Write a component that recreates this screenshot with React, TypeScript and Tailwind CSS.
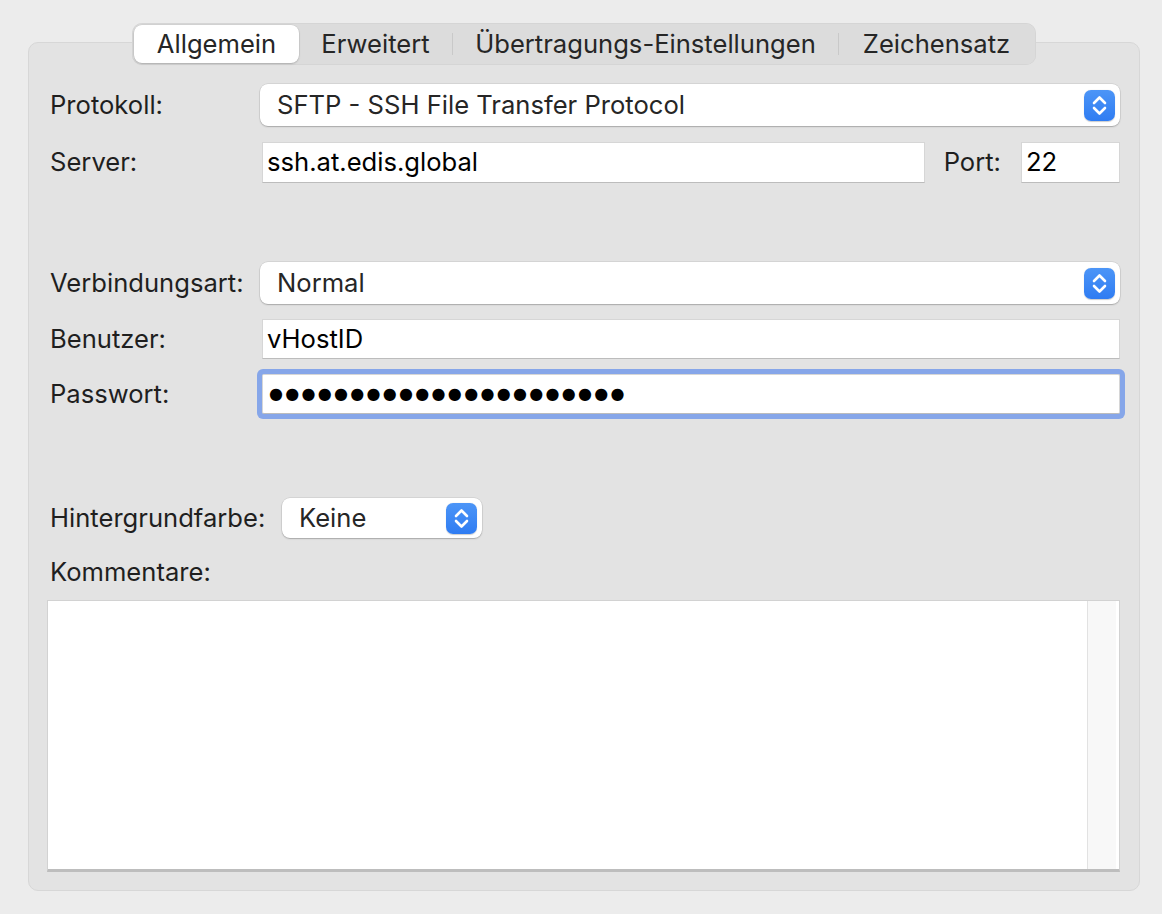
import React from 'react';

const FONT = "font-['Inter','Liberation_Sans',sans-serif]";

const Stepper: React.FC = () => (
  <div className="w-[31px] h-[31px] rounded-[7px] bg-gradient-to-b from-[#4c95f7] to-[#2f7cf2] flex items-center justify-center shadow-[0_0.5px_1px_rgba(0,0,0,0.2)]">
    <svg width="31" height="31" viewBox="0 0 31 31" fill="none">
      <path d="M10 13 L15.5 7.5 L21 13" stroke="white" strokeWidth="2.6" strokeLinecap="round" strokeLinejoin="round" />
      <path d="M10 18 L15.5 23.5 L21 18" stroke="white" strokeWidth="2.6" strokeLinecap="round" strokeLinejoin="round" />
    </svg>
  </div>
);

const Popup: React.FC<{ value: string; className?: string }> = ({ value, className = '' }) => (
  <div className={`bg-white rounded-[8px] shadow-[0_0_0_0.5px_rgba(0,0,0,0.12),0_1px_1.5px_rgba(0,0,0,0.22)] flex items-center justify-between pl-[17px] pr-[5px] ${className}`}>
    <span className="text-[25.6px] text-[#262626]">{value}</span>
    <Stepper />
  </div>
);

const Field: React.FC<{ children?: React.ReactNode; className?: string }> = ({ children, className = '' }) => (
  <div className={`bg-white border border-[#d6d6d6] border-b-[#bcbcbc] flex items-center pl-[4px] text-[25.6px] text-black ${className}`}>
    {children}
  </div>
);

const Label: React.FC<{ children: React.ReactNode; className?: string }> = ({ children, className = '' }) => (
  <div className={`text-[25.6px] text-[#1f1f1f] shrink-0 ${className}`}>{children}</div>
);

const tabs = [
  { name: 'Allgemein', w: 'w-[165px]' },
  { name: 'Erweitert', w: 'w-[153px]' },
  { name: 'Übertragungs-Einstellungen', w: 'w-[385px]' },
  { name: 'Zeichensatz', w: 'w-[195px]' },
];

export default function App() {
  return (
    <div className={`w-[1162px] h-[914px] bg-[#ececec] pt-[23px] pl-[28px] pr-[22px] ${FONT}`}>
      {/* segmented tabs */}
      <div className="relative z-10 flex justify-center">
        <div className="flex items-center h-[42px] p-[2px] rounded-[10px] bg-[#dcdcdc] shadow-[inset_0_0_0_0.5px_rgba(0,0,0,0.06)]">
          {tabs.map((t, i) => (
            <React.Fragment key={t.name}>
              {i > 1 && <div className="w-px h-[22px] bg-[#c9c9c9]" />}
              <div
                className={`${t.w} h-[38px] flex items-center justify-center text-[25.6px] text-[#262626] ${
                  i === 0 ? 'bg-white rounded-[8px] shadow-[0_0_0_0.5px_rgba(0,0,0,0.08),0_1px_2px_rgba(0,0,0,0.18)]' : ''
                }`}
              >
                {t.name}
              </div>
            </React.Fragment>
          ))}
        </div>
      </div>

      {/* panel */}
      <div className="-mt-[23px] bg-[#e3e3e3] border border-[#d7d7d7] rounded-[10px] pt-[41px] pl-[21px] pr-[19px] pb-[18px]">
        <div className="flex items-center">
          <Label className="w-[210px]">Protokoll:</Label>
          <Popup value="SFTP - SSH File Transfer Protocol" className="flex-1 h-[42px]" />
        </div>

        <div className="flex items-center mt-[16px]">
          <Label className="w-[212px]">Server:</Label>
          <Field className="flex-1 h-[41px]">ssh.at.edis.global</Field>
          <Label className="ml-[19px] mr-[20px]">Port:</Label>
          <Field className="w-[99px] h-[41px]">22</Field>
        </div>

        <div className="flex items-center mt-[79px]">
          <Label className="w-[210px]">Verbindungsart:</Label>
          <Popup value="Normal" className="flex-1 h-[42px]" />
        </div>

        <div className="flex items-center mt-[15px]">
          <Label className="w-[212px]">Benutzer:</Label>
          <Field className="flex-1 h-[40px]">vHostID</Field>
        </div>

        <div className="flex items-center mt-[15px]">
          <Label className="w-[212px]">Passwort:</Label>
          <Field className="flex-1 h-[40px] rounded-[2px] shadow-[0_0_0_5px_#86a6e9] pl-[6px]">
            <span className="font-['DejaVu_Sans',sans-serif] text-[16px] tracking-[2.3px] leading-none">
              {'●'.repeat(22)}
            </span>
          </Field>
        </div>

        <div className="flex items-center mt-[84px]">
          <Label className="w-[232px]">Hintergrundfarbe:</Label>
          <Popup value="Keine" className="w-[200px] h-[40px]" />
        </div>

        <div className="mt-[21px] h-[26px] flex items-center">
          <Label>Kommentare:</Label>
        </div>

        <div className="mt-[15px] -ml-[3px] h-[272px] bg-white border border-[#d2d2d2] border-b-[3px] border-b-[#bdbdbd] flex">
          <div className="flex-1" />
          <div className="w-[29px] bg-[#f8f8f8] border-l border-[#e2e2e2] mr-[3px]" />
        </div>
      </div>
    </div>
  );
}
